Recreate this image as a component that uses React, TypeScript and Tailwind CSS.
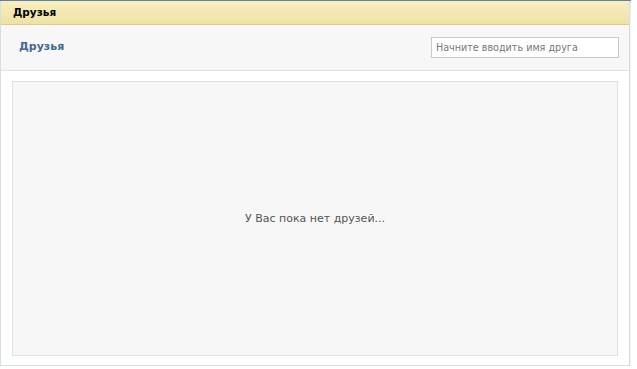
export default function App() {
  return (
    <div className="w-[637px] h-[369px] bg-white font-['DejaVu_Sans',Tahoma,sans-serif] text-[11px]">
      <div className="w-[631px] border-t border-[#5f7fa3] pr-[1px] bg-[#eef1f4]">
        <div className="border-x border-b border-[#d5dde6] bg-white">
          {/* Title bar */}
          <div className="h-[24px] flex items-center px-[12px] bg-gradient-to-b from-[#f8efbf] to-[#efe2a3] border-b border-[#dccb8b]">
            <span className="font-bold text-black text-[10.5px]">Друзья</span>
          </div>

          {/* Toolbar */}
          <div className="h-[46px] flex items-center justify-between pl-[18px] pr-[10px] bg-[#f7f7f7] border-b border-[#dae1e8]">
            <span className="font-bold text-[#45688e] text-[11px]">Друзья</span>
            <input
              className="w-[188px] h-[21px] border border-[#c0cad5] bg-white px-[4px] text-[9.6px] text-[#333] outline-none placeholder:text-[#777]"
              placeholder="Начните вводить имя друга"
            />
          </div>

          {/* Content */}
          <div className="px-[11px] pt-[10px] pb-[9px]">
            <div className="h-[275px] flex items-center justify-center bg-[#f7f7f7] border border-[#dae1e8]">
              <span className="text-[#555] text-[11px] mt-[2px]">У Вас пока нет друзей...</span>
            </div>
          </div>
        </div>
      </div>
    </div>
  );
}
